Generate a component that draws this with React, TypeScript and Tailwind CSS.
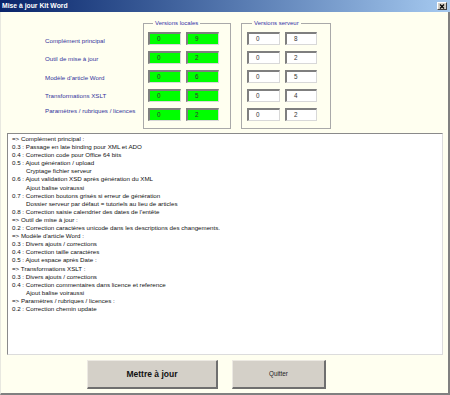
import React from "react";

const font = { fontFamily: '"Liberation Sans", Arial, sans-serif' };

const labels = [
  { text: "Complément principal", cls: "mt-[0px]" },
  { text: "Outil de mise à jour", cls: "mt-[10.3px]" },
  { text: "Modèle d'article Word", cls: "mt-[11px]" },
  { text: "Transformations XSLT", cls: "mt-[10px]" },
  { text: "Paramètres / rubriques / licences", cls: "mt-[7px]" },
];

const locales = [
  ["0", "9"],
  ["0", "2"],
  ["0", "6"],
  ["0", "5"],
  ["0", "2"],
];

const serveur = [
  ["0", "8"],
  ["0", "2"],
  ["0", "5"],
  ["0", "4"],
  ["0", "2"],
];

const changes: { text: string; indent?: boolean }[] = [
  { text: "=> Complément principal :" },
  { text: "0.3 : Passage en late binding pour XML et ADO" },
  { text: "0.4 : Correction code pour Office 64 bits" },
  { text: "0.5 : Ajout génération / upload" },
  { text: "Cryptage fichier serveur", indent: true },
  { text: "0.6 : Ajout validation XSD après génération du XML" },
  { text: "Ajout balise voiraussi", indent: true },
  { text: "0.7 : Correction boutons grisés si erreur de génération" },
  { text: "Dossier serveur par défaut = tutoriels au lieu de articles", indent: true },
  { text: "0.8 : Correction saisie calendrier des dates de l'entête" },
  { text: "=> Outil de mise à jour :" },
  { text: "0.2 : Correction caractères unicode dans les descriptions des changements." },
  { text: "=> Modèle d'article Word :" },
  { text: "0.3 : Divers ajouts / corrections" },
  { text: "0.4 : Correction taille caractères" },
  { text: "0.5 : Ajout espace après Date :" },
  { text: "=> Transformations XSLT :" },
  { text: "0.3 : Divers ajouts / corrections" },
  { text: "0.4 : Correction commentaires dans licence et reference" },
  { text: "Ajout balise voiraussi", indent: true },
  { text: "=> Paramètres / rubriques / licences :" },
  { text: "0.2 : Correction chemin update" },
];

const VersionBox = ({ value, green, wide }: { value: string; green: boolean; wide?: boolean }) => (
  <div
    className={`h-[13px] ${wide ? "w-[33px]" : "w-[32px]"} border-t-2 border-l-2 border-t-[#7f7f7f] border-l-[#7f7f7f] border-b border-r border-b-[#d8d8d8] border-r-[#d8d8d8] pl-[7px] text-[6.3px] leading-[10px] text-[#333] ${
      green ? "bg-[#00ff00]" : "bg-white"
    }`}
  >
    {value}
  </div>
);

const Frame = ({
  title,
  rows,
  green,
  className,
}: {
  title: string;
  rows: string[][];
  green: boolean;
  className: string;
}) => (
  <fieldset className={`h-[111px] border border-[#a9a9a9] ${className}`}>
    <legend className="ml-[5px] px-[2px] text-[6px] leading-[10px] text-[#3434a8]">{title}</legend>
    <div className="flex flex-col gap-[6px] pt-[4px]">
      {rows.map((r, i) => (
        <div key={i} className="flex gap-[5px]">
          <VersionBox value={r[0]} green={green} wide />
          <VersionBox value={r[1]} green={green} wide={green} />
        </div>
      ))}
    </div>
  </fieldset>
);

export default function App() {
  return (
    <div className="w-[450px] h-[395px] bg-[#fffff0] flex flex-col" style={font}>
      {/* title bar */}
      <div className="h-[12px] flex items-center justify-between bg-gradient-to-r from-[#0a246a] to-[#a6caf0] pl-[2px] pr-[3px]">
        <span className="text-[6.8px] font-bold leading-[12px] text-white">Mise à jour Kit Word</span>
        <div className="w-[10px] h-[8px] bg-[#d4d0c8] border-t border-l border-white border-b border-r border-b-[#404040] border-r-[#404040] flex items-center justify-center">
          <svg width="6" height="5" viewBox="0 0 6 5">
            <path d="M1 0.5 L5 4.5 M5 0.5 L1 4.5" stroke="#000" strokeWidth="1.2" />
          </svg>
        </div>
      </div>

      <div className="flex-1 flex flex-col border-l border-r-2 border-b-2 border-l-[#e8e8e0] border-r-[#808080] border-b-[#808080]">
        {/* versions */}
        <div className="flex mt-[6px]">
          <div className="w-[142px] pl-[44px] pt-[19px] flex flex-col">
            {labels.map((l) => (
              <div key={l.text} className={`text-[6.2px] leading-[8px] text-[#33339c] whitespace-nowrap ${l.cls}`}>
                {l.text}
              </div>
            ))}
          </div>
          <Frame title="Versions locales" rows={locales} green className="w-[88px] pl-[4px]" />
          <Frame title="Versions serveur" rows={serveur} green={false} className="w-[90px] ml-[10px] pl-[5px]" />
        </div>

        {/* change log */}
        <div className="mt-[4px] ml-[6px] w-[436px] h-[222px] bg-white border border-t-[#8a8a8a] border-l-[#8a8a8a] border-b-[#dcdcdc] border-r-[#dcdcdc] pl-[4px] pt-[1px] text-[6.2px] leading-[8.1px] text-[#111]">
          {changes.map((c, i) => (
            <div key={i} className={`whitespace-nowrap ${c.indent ? "pl-[14px]" : ""}`}>
              {c.text}
            </div>
          ))}
        </div>

        {/* buttons */}
        <div className="flex mt-[5px] pl-[86px] gap-[14px]">
          <button className="w-[131px] h-[29px] bg-[#d4d0c8] border-t border-l border-t-[#ece9e2] border-l-[#ece9e2] border-b-2 border-r-2 border-b-[#6f6f6f] border-r-[#6f6f6f] text-[8.5px] font-bold text-[#111]">
            Mettre à jour
          </button>
          <button className="w-[94px] h-[29px] bg-[#d4d0c8] border-t border-l border-t-[#ece9e2] border-l-[#ece9e2] border-b-2 border-r-2 border-b-[#6f6f6f] border-r-[#6f6f6f] text-[6.3px] text-[#222]">
            Quitter
          </button>
        </div>
      </div>
    </div>
  );
}
